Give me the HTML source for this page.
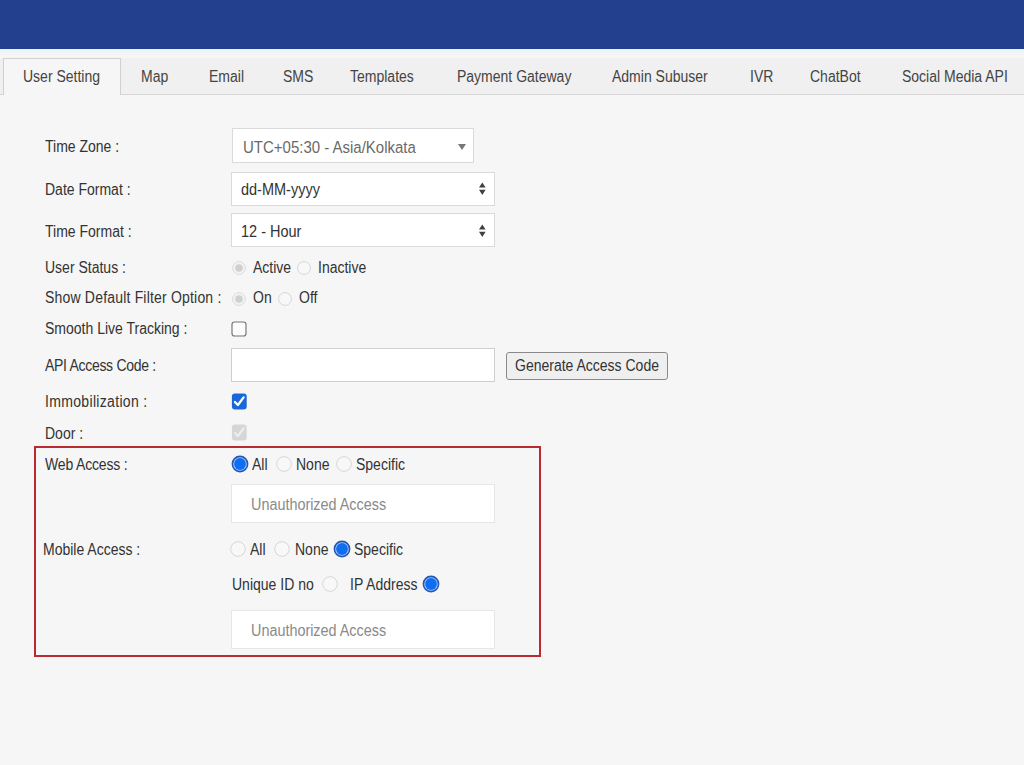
<!DOCTYPE html>
<html><head><meta charset="utf-8">
<style>
html,body{margin:0;padding:0;width:1024px;height:765px;overflow:hidden;background:#f6f6f6;font-family:"Liberation Sans",sans-serif;color:#333;font-size:14px;}

.abs{position:absolute;}
#hdr{left:0;top:0;width:1024px;height:49px;background:#23408f;}
#strip{left:0;top:49px;width:1024px;height:9px;background:linear-gradient(#e6eef8 0px,#eef6fb 2px,#f3f6f4 5px,#f6f6f6 8px);}
#tabbar{left:0;top:58px;width:1024px;height:36px;background:#f0f0f0;border-bottom:1px solid #d6d6d6;}
#acttab{left:3px;top:58px;width:118px;height:37px;background:#f6f6f6;border:1px solid #d0d0d0;border-bottom:none;box-sizing:border-box;}
.tab{position:absolute;top:68px;font-size:16px;transform:scaleX(0.875);transform-origin:0 50%;color:#444;white-space:nowrap;line-height:18.6px;}
.lbl{position:absolute;left:45px;font-size:16px;transform:scaleX(0.875);transform-origin:0 50%;color:#333;white-space:nowrap;line-height:16.6px;}
.inp{position:absolute;background:#fff;border:1px solid #d4d4d4;box-sizing:border-box;}
.sel{position:absolute;background:#fff;border:1px solid #dadada;box-sizing:border-box;}
.txt{position:absolute;white-space:nowrap;line-height:16.6px;font-size:16px;transform:scaleX(0.875);transform-origin:0 50%;}
#redbox{left:34px;top:446px;width:507px;height:211px;border:2px solid #bb2a2e;box-sizing:border-box;}
</style></head>
<body>
<div id="hdr" class="abs"></div>
<div id="strip" class="abs"></div>
<div id="tabbar" class="abs"></div>
<div id="acttab" class="abs"></div>
<div class="tab" style="left:23px">User Setting</div>
<div class="tab" style="left:141px">Map</div>
<div class="tab" style="left:209px">Email</div>
<div class="tab" style="left:283px">SMS</div>
<div class="tab" style="left:350px">Templates</div>
<div class="tab" style="left:457px">Payment Gateway</div>
<div class="tab" style="left:612px">Admin Subuser</div>
<div class="tab" style="left:750px">IVR</div>
<div class="tab" style="left:810px">ChatBot</div>
<div class="tab" style="left:902px">Social Media API</div>

<div class="lbl" style="top:139px">Time Zone :</div>
<div class="lbl" style="top:182px">Date Format :</div>
<div class="lbl" style="top:224px">Time Format :</div>
<div class="lbl" style="top:260px">User Status :</div>
<div class="lbl" style="top:290px;letter-spacing:0.217px">Show Default Filter Option :</div>
<div class="lbl" style="top:321px">Smooth Live Tracking :</div>
<div class="lbl" style="top:358px;letter-spacing:-0.343px">API Access Code :</div>
<div class="lbl" style="top:394px;letter-spacing:0.377px">Immobilization :</div>
<div class="lbl" style="top:426px">Door :</div>

<!-- selects -->
<div class="sel" style="left:232px;top:128px;width:242px;height:35px;"></div>
<div class="txt" style="left:243px;top:138px;color:#6a6a6a;font-size:17.14px;line-height:18.5px">UTC+05:30 - Asia/Kolkata</div>
<svg class="abs" style="left:457px;top:143px" width="10" height="8"><path d="M1 1 L9 1 L5 7 Z" fill="#777"/></svg>
<div class="sel" style="left:231px;top:172px;width:264px;height:34px;"></div>
<div class="txt" style="left:241px;top:182px;color:#333;font-size:16.57px;line-height:16.56px">dd-MM-yyyy</div>
<svg class="abs" style="left:478px;top:182px" width="8" height="14"><path d="M1 5.6 L7.6 5.6 L4.3 0.4 Z M1 7.8 L7.6 7.8 L4.3 13 Z" fill="#404040"/></svg>
<div class="sel" style="left:231px;top:213px;width:264px;height:34px;"></div>
<div class="txt" style="left:241px;top:224px;color:#333;font-size:16.57px;line-height:16.56px">12 - Hour</div>
<svg class="abs" style="left:478px;top:224px" width="8" height="14"><path d="M1 5.6 L7.6 5.6 L4.3 0.4 Z M1 7.8 L7.6 7.8 L4.3 13 Z" fill="#404040"/></svg>

<!-- radios -->
<svg class="abs" style="left:232px;top:261px" width="14" height="14"><circle cx="7" cy="7" r="6.4" fill="#f2f2f2" stroke="#dcdcdc" stroke-width="1"/><circle cx="7" cy="7" r="3.8" fill="#d0d0d0"/></svg>
<div class="txt" style="left:253px;top:260px">Active</div>
<svg class="abs" style="left:297px;top:261px" width="14" height="14"><circle cx="7" cy="7" r="6.4" fill="#f8f8f8" stroke="#d6d6d6" stroke-width="1"/></svg>
<div class="txt" style="left:318px;top:260px">Inactive</div>
<svg class="abs" style="left:232px;top:292px" width="14" height="14"><circle cx="7" cy="7" r="6.4" fill="#f2f2f2" stroke="#dcdcdc" stroke-width="1"/><circle cx="7" cy="7" r="3.8" fill="#d0d0d0"/></svg>
<div class="txt" style="left:253px;top:290px">On</div>
<svg class="abs" style="left:278px;top:292px" width="14" height="14"><circle cx="7" cy="7" r="6.4" fill="#f8f8f8" stroke="#d6d6d6" stroke-width="1"/></svg>
<div class="txt" style="left:299px;top:290px">Off</div>

<!-- checkboxes -->
<svg class="abs" style="left:231px;top:321px" width="16" height="16"><rect x="1" y="1" width="14" height="14" rx="2.5" fill="#fcfcfc" stroke="#737373" stroke-width="1.15"/></svg>

<div class="inp" style="left:231px;top:348px;width:264px;height:34px;border-color:#cfcfcf"></div>
<div class="abs" style="left:506px;top:352px;width:162px;height:28px;border:1px solid #8a8a8a;border-radius:3px;background:#efefef;box-sizing:border-box;"></div>
<div class="txt" style="left:515px;top:358px">Generate Access Code</div>

<svg class="abs" style="left:231px;top:393px" width="17" height="17"><rect x="0.9" y="0.5" width="14.8" height="16" rx="3" fill="#1868dc"/><path d="M3.9 9 L6.9 12 L12.6 4.4" fill="none" stroke="#fff" stroke-width="2.3" stroke-linecap="round" stroke-linejoin="round"/></svg>
<svg class="abs" style="left:231px;top:424px" width="17" height="17"><rect x="0.9" y="0.6" width="14.8" height="15.8" rx="3" fill="#d6d6d6"/><path d="M3.9 9 L6.9 12 L12.6 4.4" fill="none" stroke="#ededed" stroke-width="2.1" stroke-linecap="round" stroke-linejoin="round"/></svg>

<div id="redbox" class="abs"></div>
<div class="lbl" style="top:457px;letter-spacing:-0.194px">Web Access :</div>
<svg class="abs" style="left:231px;top:455px" width="18" height="18"><circle cx="9" cy="9" r="7.6" fill="#a9cdfb" stroke="#2456b4" stroke-width="1.6"/><circle cx="9" cy="9" r="5.9" fill="#0e6df0"/></svg>
<div class="txt" style="left:252px;top:457px">All</div>
<svg class="abs" style="left:276px;top:456px" width="16" height="16"><circle cx="8" cy="8" r="7.3" fill="#f8f8f8" stroke="#d6d6d6" stroke-width="1"/></svg>
<div class="txt" style="left:296px;top:457px">None</div>
<svg class="abs" style="left:336px;top:456px" width="16" height="16"><circle cx="8" cy="8" r="7.3" fill="#f8f8f8" stroke="#d6d6d6" stroke-width="1"/></svg>
<div class="txt" style="left:356px;top:457px">Specific</div>
<div class="inp" style="left:231px;top:484px;width:264px;height:39px;border-color:#e6e6e6"></div>
<div class="txt" style="left:251px;top:496px;color:#8a8a8a;font-size:16.46px;line-height:16.57px">Unauthorized Access</div>

<div class="lbl" style="left:43px;top:542px">Mobile Access :</div>
<svg class="abs" style="left:230px;top:541px" width="16" height="16"><circle cx="8" cy="8" r="7.3" fill="#f8f8f8" stroke="#d6d6d6" stroke-width="1"/></svg>
<div class="txt" style="left:250px;top:542px">All</div>
<svg class="abs" style="left:274px;top:541px" width="16" height="16"><circle cx="8" cy="8" r="7.3" fill="#f8f8f8" stroke="#d6d6d6" stroke-width="1"/></svg>
<div class="txt" style="left:295px;top:542px">None</div>
<svg class="abs" style="left:333px;top:540px" width="18" height="18"><circle cx="9" cy="9" r="7.6" fill="#a9cdfb" stroke="#2456b4" stroke-width="1.6"/><circle cx="9" cy="9" r="5.9" fill="#0e6df0"/></svg>
<div class="txt" style="left:354px;top:542px">Specific</div>
<div class="txt" style="left:232px;top:577px">Unique ID no</div>
<svg class="abs" style="left:322px;top:576px" width="16" height="16"><circle cx="8" cy="8" r="7.3" fill="#f8f8f8" stroke="#d6d6d6" stroke-width="1"/></svg>
<div class="txt" style="left:350px;top:577px">IP Address</div>
<svg class="abs" style="left:422px;top:575px" width="18" height="18"><circle cx="9" cy="9" r="7.6" fill="#a9cdfb" stroke="#2456b4" stroke-width="1.6"/><circle cx="9" cy="9" r="5.9" fill="#0e6df0"/></svg>
<div class="inp" style="left:231px;top:610px;width:264px;height:39px;border-color:#e6e6e6"></div>
<div class="txt" style="left:251px;top:622px;color:#8a8a8a;font-size:16.46px;line-height:16.57px">Unauthorized Access</div>
</body></html>
